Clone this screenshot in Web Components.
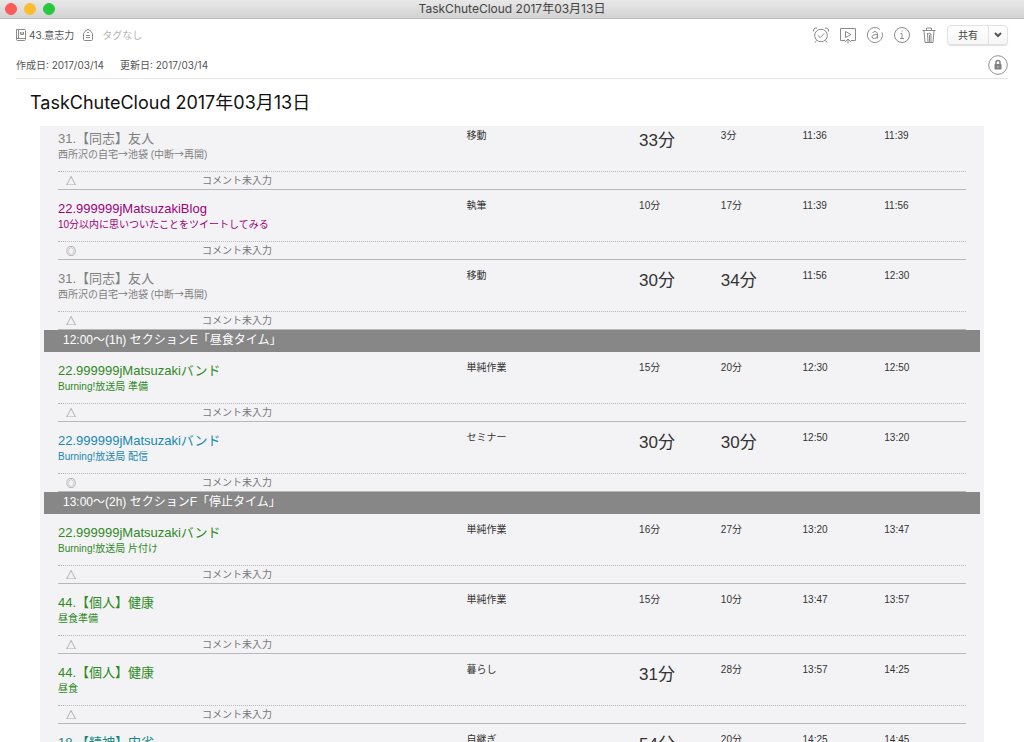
<!DOCTYPE html>
<html lang="ja">
<head>
<meta charset="utf-8">
<title>TaskChuteCloud 2017年03月13日</title>
<style>
  html, body { height: 100%; }
  body { margin: 0; background: #fff; overflow: hidden; font-family: Inter, "Noto Sans CJK JP", sans-serif; color: #333; }
</style>
</head>
<body>
<note-window>
  <window-bar>TaskChuteCloud 2017年03月13日</window-bar>
  <note-toolbar notebook="43.意志力" tags="タグなし"></note-toolbar>
  <note-dates created="2017/03/14" updated="2017/03/14"></note-dates>
  <note-body heading="TaskChuteCloud 2017年03月13日">
    <task-section></task-section>
    <task-section>12:00〜(1h) セクションE「昼食タイム」</task-section>
    <task-section>13:00〜(2h) セクションF「停止タイム」</task-section>
  </note-body>
</note-window>

<script>
const define = (name, markup, setup) => {
  const template = document.createElement('template');
  template.innerHTML = markup;
  customElements.define(name, class extends HTMLElement {
    constructor() {
      super();
      this.attachShadow({ mode: 'open' }).append(template.content.cloneNode(true));
    }
    connectedCallback() {
      if (setup && !this.ready) { this.ready = true; setup(this, this.shadowRoot); }
    }
  });
};

define('note-window', `
<style>
  :host { display: flex; flex-direction: column; height: 100vh; overflow: hidden; }
</style>
<slot></slot>`);

define('window-bar', `
<style>
  :host { display: grid; grid-template-columns: 1fr auto 1fr; align-items: center; flex: none; height: 18px;
    padding: 0 5px; background: linear-gradient(#e8e8e8, #d3d3d3); border-bottom: 1px solid #bdbdbd;
    font-size: 12px; line-height: 18px; color: #444; }
  .lights { display: flex; gap: 7px; }
  button { width: 12px; height: 12px; padding: 0; border: 1px solid; border-radius: 50%; }
  .close { background: #fc5b57; border-color: #fc5b57; }
  .min { background: #fdbc2e; border-color: #fdbc2e; }
  .zoom { background: #27c840; border-color: #27c840; }
</style>
<div class="lights">
  <button class="close" aria-label="閉じる"></button>
  <button class="min" aria-label="しまう"></button>
  <button class="zoom" aria-label="拡大"></button>
</div>
<slot></slot>`);

define('note-toolbar', `
<style>
  :host { display: flex; align-items: center; justify-content: space-between; flex: none; height: 32px; padding: 0 16px;
    font-size: 10px; line-height: 16px; color: #555; }
  .left, .right { display: flex; align-items: center; }
  button { margin: 0; padding: 0; border: 0; background: none; font: inherit; color: inherit; display: flex; align-items: center; }
  svg { display: block; fill: none; stroke: #8a8a8a; stroke-width: 1; }
  .notebook { gap: 3px; margin-right: 9px; }
  .tags { gap: 9px; color: #b5b5b5; }
  .right { gap: 9px; }
  .share { display: flex; height: 20px; border: 1px solid #e2e2e2; border-radius: 4px; background: linear-gradient(#fff, #f6f6f6);
    box-shadow: 0 1px 1px #ddd; box-sizing: border-box; color: #444; }
  .share button { width: 40px; justify-content: center; }
  .share .more { width: 19px; border-left: 1px solid #e2e2e2; }
  .more svg { stroke: #555; stroke-width: 2; }
</style>
<div class="left">
  <button class="notebook">
    <svg width="10" height="12" viewBox="0 0 10 12"><path d="M1 .5h7.500q1 0 1 1v9q0 1-1 1H1.500q-1 0-1-1V.5zM2.500 1v8.500M.5 9.500h9M4.500 3v2.500h3V3M6 3v2"/></svg>
    <span></span>
  </button>
  <button class="tags">
    <svg width="10" height="12" viewBox="0 0 10 12"><path d="M.5 4.500 3.500 1q1.500-1 3 0l3 3.500v6q0 1-1 1h-7q-1 0-1-1zM3 6.500h4M3 8.500h4"/><circle cx="5" cy="3.500" r=".5"/></svg>
    <span></span>
  </button>
</div>
<div class="right">
  <button aria-label="リマインダー"><svg width="18" height="18" viewBox="0 0 18 18"><circle cx="9" cy="9.500" r="6.300"/><path d="m6 9.500 2.200 2 4-4M1.500 5.500Q.8 2 5 2M16.500 5.500Q17.200 2 13 2M4.500 14.500 3 16.500M13.500 14.500l1.500 2"/></svg></button>
  <button aria-label="プレゼンテーション"><svg width="18" height="18" viewBox="0 0 18 18"><path d="M6 14.500H1.500v-12h15v12H12M6.500 5.500v6l5.500-3zM9 17.500v-4.500M6 16l3-3 3 3"/></svg></button>
  <button aria-label="コメント"><svg width="18" height="18" viewBox="0 0 18 18"><path d="M14 3.500a7.500 7.500 0 1 0 2 3M6.500 7q1-1.500 2.500-1.500t2.500 2v5M11.500 8.500Q6 8.500 6 10.700T8.500 12.500q3 0 3-3"/></svg></button>
  <button aria-label="情報"><svg width="18" height="18" viewBox="0 0 18 18"><circle cx="9" cy="9" r="7.500"/><path d="M7.500 7.500H9v5M7 12.500h4M8.500 5h1"/></svg></button>
  <button aria-label="削除"><svg width="18" height="18" viewBox="0 0 18 18"><path d="M2.500 4.500h13M6.500 4V2h5v2M4 4.500 5 16.500h8l1-12M7.500 7l.5 9M9.500 9v7M7 8q4-2 4 1v7"/></svg></button>
  <div class="share">
    <button>共有</button>
    <button class="more" aria-label="共有メニュー"><svg width="8" height="6" viewBox="0 0 8 6"><path d="m1 1 3 3 3-3"/></svg></button>
  </div>
</div>`, (host, root) => {
  root.querySelector('.notebook span').textContent = host.getAttribute('notebook');
  root.querySelector('.tags span').textContent = host.getAttribute('tags');
});

define('note-dates', `
<style>
  :host { display: flex; align-items: center; flex: none; height: 27px; margin: 0 16px; border-bottom: 1px solid #e6e6e6;
    font-size: 10px; line-height: 16px; color: #555; gap: 16px; }
  button { width: 20px; height: 20px; padding: 0; margin-left: auto; border: 0; background: none; }
  svg { display: block; }
</style>
<span class="created"></span><span class="updated"></span>
<button aria-label="ロック"><svg width="20" height="20" viewBox="0 0 20 20"><circle cx="10" cy="10" r="9.300" fill="none" stroke="#909090" stroke-width="1"/><rect x="6.500" y="9" width="7" height="5.500" rx=".7" fill="#808080"/><path d="M8 9V7.500a2 2 0 0 1 4 0V9" fill="none" stroke="#808080" stroke-width="1.500"/><path d="M10 11v1.500" stroke="#ddd"/></svg></button>`, (host, root) => {
  root.querySelector('.created').textContent = '作成日: ' + host.getAttribute('created');
  root.querySelector('.updated').textContent = '更新日: ' + host.getAttribute('updated');
});

define('note-body', `
<style>
  :host { display: block; flex: 1; min-height: 0; overflow: hidden; }
  h1 { margin: 10px 30px; font-size: 18px; line-height: 27px; font-weight: 400; color: #111; }
  .panel { margin: 0 40px; padding: 0 4px; background: #f3f3f5; }
</style>
<h1></h1>
<div class="panel"><slot></slot></div>`, (host, root) => {
  root.querySelector('h1').textContent = host.getAttribute('heading');
});

const GRAY = '#808080', GREEN = '#2f8a1e', PURPLE = '#a0007a', BLUE = '#1888b0', TEAL = '#128a80';
const tasks = [
  [
    [GRAY, '31.【同志】友人', '西所沢の自宅→池袋 (中断→再開)', '移動', '33分', '3分', '11:36', '11:39', '△'],
    [PURPLE, '22.999999jMatsuzakiBlog', '10分以内に思いついたことをツイートしてみる', '執筆', '10分', '17分', '11:39', '11:56', '◎'],
    [GRAY, '31.【同志】友人', '西所沢の自宅→池袋 (中断→再開)', '移動', '30分', '34分', '11:56', '12:30', '△'],
  ],
  [
    [GREEN, '22.999999jMatsuzakiバンド', 'Burning!放送局 準備', '単純作業', '15分', '20分', '12:30', '12:50', '△'],
    [BLUE, '22.999999jMatsuzakiバンド', 'Burning!放送局 配信', 'セミナー', '30分', '30分', '12:50', '13:20', '◎'],
  ],
  [
    [GREEN, '22.999999jMatsuzakiバンド', 'Burning!放送局 片付け', '単純作業', '16分', '27分', '13:20', '13:47', '△'],
    [GREEN, '44.【個人】健康', '昼食準備', '単純作業', '15分', '10分', '13:47', '13:57', '△'],
    [GREEN, '44.【個人】健康', '昼食', '暮らし', '31分', '28分', '13:57', '14:25', '△'],
    [TEAL, '18.【精神】内省', '', '自継ぎ', '54分', '20分', '14:25', '14:45', '△'],
  ],
];

define('task-section', `
<style>
  :host { display: block; font-family: "Liberation Sans", "Noto Sans CJK JP", sans-serif; color: #333; }
  h2 { margin: 0; padding: 0 19px; height: 22px; background: #878787; color: #fff; font-size: 12px; line-height: 20px; font-weight: 400; }
  .rows { padding: 0 14px; }
  table { width: 100%; table-layout: fixed; border-collapse: separate; border-spacing: 0; font-size: 10px; line-height: 14px; }
  .name { width: 45%; }
  .kind { width: 19%; }
  td { padding: 9px 0 0; vertical-align: top; white-space: nowrap; }
  .task td { box-sizing: border-box; height: 51px; }
  :host(:first-of-type) tbody:first-of-type .task td { padding-top: 3px; height: 45px; }
  .title { font-size: 13px; line-height: 20px; }
  .sub { line-height: 12px; }
  .long { display: block; font-size: 17px; line-height: 24px; }
  .note td { padding: 0 8px; height: 17px; line-height: 17px; color: #777;
    border-top: 1px dotted #b8b8b8; border-bottom: 1px solid #b8b8b8; }
  .note div { display: flex; height: 17px; }
  .mark { width: 136px; }
  .mark, .arrow { font-family: "Noto Sans CJK JP", sans-serif; }
  .arrow { line-height: 1; }
</style>
<h2><slot></slot></h2>
<div class="rows"><table><colgroup><col class="name"><col class="kind"><col><col><col><col></colgroup></table></div>`, (host, root) => {
  const sections = [...host.parentNode.querySelectorAll('task-section')];
  if (!host.textContent) root.querySelector('h2').remove();
  const duration = text => parseInt(text) >= 30 ? `<span class="long">${text}</span>` : text;
  const arrows = text => text.replaceAll('→', '<span class="arrow">→</span>');
  const rows = tasks[sections.indexOf(host)].map(([color, title, sub, kind, plan, real, start, end, mark]) => `
    <tbody>
      <tr class="task">
        <td style="color:${color}"><div class="title">${title}</div><div class="sub">${arrows(sub)}</div></td>
        <td>${kind}</td><td>${duration(plan)}</td><td>${duration(real)}</td><td>${start}</td><td>${end}</td>
      </tr>
      <tr class="note"><td colspan="6"><div><span class="mark">${mark}</span><span>コメント未入力</span></div></td></tr>
    </tbody>`).join('');
  root.querySelector('table').insertAdjacentHTML('beforeend', rows);
});
</script>
</body>
</html>
